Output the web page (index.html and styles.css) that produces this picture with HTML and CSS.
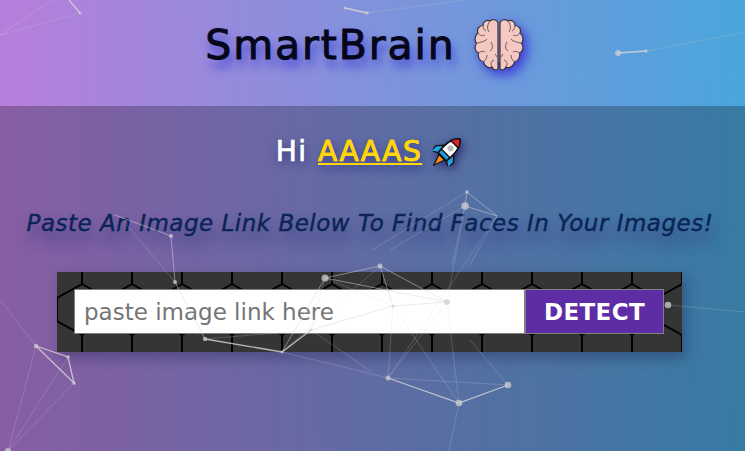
FILE: index.html

```html
<!DOCTYPE html>
<html lang="en">
<head>
  <meta charset="UTF-8">
  <title>SmartBrain</title>
  <link rel="stylesheet" href="styles.css">
</head>
<body>
  <header class="top">
    <h1 class="logo-text">SmartBrain</h1>
    <svg class="brain" viewBox="0 0 50 54">
      <g id="half">
        <path class="brain-fill" d="M24 5C23 1.500 19 .5 16 3C13 1.500 9 3 9 7.500C5 7.500 2.500 11.500 4 15C1 17 0 22.500 2.500 25.500C0 29 1 34 4.500 35C3.500 39.500 6 43.500 9.500 43.500C10 48.500 15 51 18 49C20 53 24 53 24 49.500Z"/>
        <path class="brain-fold" d="M16 3C13 7 13 11 15 14M9 7.500C9 10 10 12 12 13M4 15C6 18 9 18 11 17M2.500 25.500C6 24 11 24 13 21M4.500 35C7 33 9 33 11 34M17 24C19 27 19 31 16 33M9.500 43.500C12 42 13 40 13 37M18 49C16 46 17 43 20 42M24 40L21 36"/>
      </g>
      <g transform="matrix(-1 0 0 1 50 0)">
        <path class="brain-fill" d="M24 5C23 1.500 19 .5 16 3C13 1.500 9 3 9 7.500C5 7.500 2.500 11.500 4 15C1 17 0 22.500 2.500 25.500C0 29 1 34 4.500 35C3.500 39.500 6 43.500 9.500 43.500C10 48.500 15 51 18 49C20 53 24 53 24 49.500Z"/>
        <path class="brain-fold" d="M16 3C13 7 13 11 15 14M9 7.500C9 10 10 12 12 13M4 15C6 18 9 18 11 17M2.500 25.500C6 24 11 24 13 21M4.500 35C7 33 9 33 11 34M17 24C19 27 19 31 16 33M9.500 43.500C12 42 13 40 13 37M18 49C16 46 17 43 20 42M24 40L21 36"/>
      </g>
      <path class="brain-mid" d="M25 5V44"/>
    </svg>
  </header>

  <main class="content">
    <div class="greeting">
      <span>Hi <a class="name" href="#">AAAAS</a></span>
      <svg class="rocket" viewBox="3 1 26 26">
        <g transform="rotate(45 15 15) translate(0 -1)">
          <path class="rocket-flame" d="M11.500 22H18.500L15 32Z"/>
          <path class="rocket-fin" d="M9.500 13L4.500 18.500V25L10 21.500ZM20.500 13L25.500 18.500V25L20 21.500Z"/>
          <path class="rocket-body" d="M15 0C20 3.500 21.500 10 20 22H10C8.500 10 10 3.500 15 0Z"/>
          <path class="rocket-nose" d="M15 0C17.500 1.800 19 4 19.800 6.500H10.200C11 4 12.500 1.800 15 0Z"/>
          <circle class="rocket-window" cx="15" cy="11.500" r="2.600"/>
          <path class="rocket-fin" d="M10 17.500H20V21.500H10Z"/>
        </g>
      </svg>
    </div>
    <p class="tagline">Paste An Image Link Below To Find Faces In Your Images!</p>
    <form class="link-form">
      <svg class="hex-bg" width="625" height="80">
        <defs>
          <pattern id="hex" x="0" y="0" width="50" height="80" patternUnits="userSpaceOnUse">
            <path d="M25 0V12L0 26V49L25 63V80M25 12L50 26V49L25 63"/>
          </pattern>
        </defs>
        <rect width="625" height="80" fill="url(#hex)"/>
      </svg>
      <input class="link-input" type="text" placeholder="paste image link here">
      <button class="detect" type="button">DETECT</button>
    </form>
  </main>

  <!-- particles canvas, sits over everything -->
  <svg class="particles" width="745" height="451">
    <g class="faint">
      <path d="M80 13L0 35M52 0L0 35M367 13L465 0M646 51L745 32M127 225L175 282"/>
      <path d="M8 451L36 346M8 451L68 357M8 451L74 383M0 300L36 346M668 305L745 312"/>
      <path d="M325 278L393 306M380 266L282 352M282 352L388 378M311 330L372 372M205 339L311 330M311 330L325 278"/>
      <path d="M447 302L459 403M470 340L508 385M388 378L393 306M388 378L447 302M388 378L508 385M459 403L449 451M459 403L393 306"/>
      <path d="M467 192L372 250M465 206L390 250M497 216L470 265M465 206L452 265M465 206L447 302M497 216L388 378"/>
    </g>
    <g class="mid">
      <path d="M115 215L171 236L175 282L205 339M325 278L447 302M380 266L447 302M393 306L447 302M380 266L393 306M311 330L393 306"/>
      <path d="M467 192L465 206L497 216L467 192M325 278L380 266M282 352L325 278"/>
    </g>
    <g class="bright">
      <path d="M80 13L69 0M345 8L367 13M618 53L646 51M205 339L282 352L311 330"/>
      <path d="M36 346L68 357L74 383L36 346M388 378L459 403L508 385"/>
    </g>
    <g class="nodes">
      <circle cx="80" cy="13" r="1.500"/><circle cx="345" cy="8" r="1.500"/><circle cx="367" cy="13" r="1.800"/>
      <circle cx="618" cy="53" r="3"/><circle cx="646" cy="51" r="1.800"/><circle cx="171" cy="236" r="2"/>
      <circle cx="175" cy="282" r="2"/><circle cx="205" cy="339" r="2.200"/><circle cx="282" cy="352" r="1.500"/>
      <circle cx="325" cy="278" r="3.500"/><circle cx="311" cy="330" r="1.500"/><circle cx="447" cy="302" r="3"/>
      <circle cx="393" cy="306" r="1.500"/><circle cx="380" cy="266" r="2.500"/><circle cx="388" cy="378" r="2.500"/>
      <circle cx="459" cy="403" r="3.300"/><circle cx="508" cy="385" r="3.300"/><circle cx="467" cy="192" r="1.800"/>
      <circle cx="465" cy="206" r="3.800"/><circle cx="36" cy="346" r="2.200"/><circle cx="68" cy="357" r="1.800"/>
      <circle cx="74" cy="383" r="1.800"/><circle cx="8" cy="451" r="3"/><circle cx="668" cy="305" r="3.300"/>
    </g>
  </svg>
</body>
</html>
```

FILE: styles.css

```css
* {
  box-sizing: border-box;
}
html, body {
  height: 100%;
}
body {
  position: relative;
  margin: 0;
  overflow: hidden;
  font-family: "DejaVu Sans", sans-serif;
  background: linear-gradient(89deg, #b87edc 0%, #4aa6dc 100%);
  text-align: center;
}
.top {
  display: flex;
  justify-content: center;
  align-items: center;
  gap: 18px;
  height: 106px;
  padding: 0 16px 16px 0;
}
.logo-text {
  margin: 0;
  font-size: 41px;
  font-weight: normal;
  line-height: 50px;
  letter-spacing: 1.9px;
  color: #06061a;
  -webkit-text-stroke: 1px #06061a;
  text-shadow: 3px 8px 10px #3d3fd0;
}
.brain {
  width: 50px;
  height: 54px;
  filter: drop-shadow(4px 5px 6px #3a3ad8);
}
.brain-fill {
  fill: #f5c8c2;
  stroke: #35353f;
  stroke-width: 1.200;
  stroke-linejoin: round;
}
.brain-fold {
  fill: none;
  stroke: #6d5a60;
  stroke-width: 1;
}
.brain-mid {
  fill: none;
  stroke: #6a5a62;
  stroke-width: 1.500;
}
.content {
  height: 345px;
  padding-top: 28px;
  background: rgba(0, 0, 0, 0.26);
}
.greeting {
  display: flex;
  justify-content: center;
  align-items: center;
  gap: 11px;
  height: 34px;
  padding-right: 6px;
  font-size: 28px;
  letter-spacing: 1.500px;
  color: #fff;
  -webkit-text-stroke: 0.7px;
  text-shadow: 2px 4px 10px #2a2a80;
}
.name {
  color: #ffd60a;
  text-decoration: underline;
}
.rocket {
  width: 30px;
  height: 30px;
  filter: drop-shadow(2px 3px 5px #2a2a70);
}
.rocket-body {
  fill: #fff;
  stroke: #111;
  stroke-width: 1.400;
}
.rocket-nose {
  fill: #e0202c;
  stroke: #111;
  stroke-width: 1.200;
}
.rocket-fin {
  fill: #22a3e6;
  stroke: #111;
  stroke-width: 1.200;
}
.rocket-flame {
  fill: #f58a1f;
  stroke: #111;
  stroke-width: 1;
}
.rocket-window {
  fill: #b9bcc0;
}
.tagline {
  margin: 41px 5px 0 0;
  font-size: 23px;
  line-height: 28px;
  font-style: italic;
  letter-spacing: 0.5px;
  white-space: nowrap;
  color: #0a2456;
  -webkit-text-stroke: 0.4px;
  text-shadow: 3px 10px 14px #3a3f80;
}
.link-form {
  position: relative;
  display: flex;
  width: 625px;
  height: 80px;
  margin: 35px 0 0 57px;
  padding: 17px 18px 18px 17px;
  background: #353535;
  box-shadow: 4px 6px 12px rgba(20, 30, 70, 0.35);
}
.hex-bg {
  position: absolute;
  left: 0;
  top: 0;
}
.hex-bg path {
  fill: none;
  stroke: #000;
  stroke-width: 2;
}
.link-input {
  position: relative;
  width: 450px;
  height: 45px;
  padding: 0 9px;
  border: 1px solid #808080;
  border-right: 0;
  border-radius: 0;
  background: #fff;
  font-family: "DejaVu Sans", sans-serif;
  font-size: 23px;
  color: #757575;
}
.link-input::placeholder {
  color: #757575;
  opacity: 1;
}
.detect {
  position: relative;
  width: 140px;
  height: 45px;
  padding: 0;
  border: 1px solid #808080;
  border-left: 2px solid #808080;
  border-radius: 0;
  background: #5e2ca5;
  font-family: "DejaVu Sans", sans-serif;
  font-size: 23px;
  font-weight: bold;
  letter-spacing: 0.4px;
  color: #fff;
}
.particles {
  position: absolute;
  left: 0;
  top: 0;
  pointer-events: none;
}
.particles path {
  fill: none;
  stroke: #d8d8d8;
}
.faint path {
  stroke-opacity: 0.22;
}
.mid path {
  stroke-opacity: 0.5;
}
.bright path {
  stroke-opacity: 0.8;
  stroke-width: 1.300;
}
.nodes circle {
  fill: #cfcfcf;
  fill-opacity: 0.75;
}
```
